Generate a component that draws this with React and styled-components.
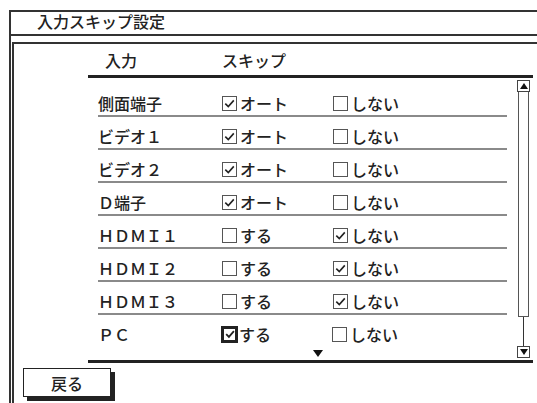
import React from 'react';
import styled, { createGlobalStyle } from 'styled-components';

const Global = createGlobalStyle`
    html, body {
        margin: 0;
        background: #fff;
    }
    body {
        font-family: "Noto Sans CJK JP", "Noto Sans", sans-serif;
        color: #222;
        overflow: hidden;
    }
    svg {
        display: block;
    }
`;

const Frame = styled.div`
    margin: 10px 0 0 9px;
    height: 393px;
    box-sizing: border-box;
    border-top: 2px solid #333;
    border-left: 2px solid #333;
    display: flex;
    flex-direction: column;
`;

const TitleBar = styled.div`
    height: 22px;
    border-bottom: 2px solid #333;
    padding-left: 26px;
    font-size: 16px;
    font-weight: 500;
    line-height: 19px;
`;

const Inner = styled.div`
    flex: 1;
    margin: 6px 0 0 1px;
    border-top: 2px solid #333;
    border-left: 2px solid #333;
    padding-top: 6px;
    display: flex;
    flex-direction: column;
`;

const HeadRow = styled.div`
    display: flex;
    margin: 0 4px 0 74px;
    padding: 0 0 5px 17px;
    border-bottom: 3px solid #222;
    font-size: 16px;
    font-weight: 500;
    line-height: 20px;
`;

const HeadCell = styled.div`
    width: ${p => p.w ? p.w + 'px' : 'auto'};
`;

const ListBody = styled.div`
    display: flex;
    margin: 0 4px 0 74px;
    padding: 0 3px 0 10px;
    border-bottom: 3px solid #222;
`;

const Rows = styled.div`
    width: 409px;
    padding-top: 6px;
`;

const Row = styled.div`
    display: flex;
    align-items: flex-end;
    height: 33px;
    box-sizing: border-box;
    padding-bottom: 3px;
    border-bottom: 2px solid ${p => p.last ? 'transparent' : '#8a8a8a'};
    font-size: 16px;
    font-weight: 500;
    line-height: 18px;
`;

const Label = styled.div`
    width: 124px;
    flex-shrink: 0;
`;

const Option = styled.div`
    display: flex;
    align-items: center;
    gap: ${p => p.bold ? '1px' : '3px'};
    width: ${p => p.w ? p.w + 'px' : 'auto'};
    margin-left: ${p => p.bold ? '-1px' : '0'};
    flex-shrink: 0;
`;

const Box = styled.span`
    flex-shrink: 0;
    width: ${p => p.bold ? '17px' : '15px'};
    height: ${p => p.bold ? '17px' : '15px'};
    box-sizing: border-box;
    border: ${p => p.bold ? '3px solid #222' : '1px solid #555'};
    display: flex;
    align-items: center;
    justify-content: center;
    background: #fff;
`;

const Footer = styled.div`
    height: 12px;
    padding-left: 215px;
    padding-top: 2px;
    box-sizing: border-box;
`;

const Scroll = styled.div`
    width: 13px;
    margin: 2px 0 2px 10px;
    display: flex;
    flex-direction: column;
`;

const ArrowBtn = styled.div`
    height: 12px;
    box-sizing: border-box;
    border: 1.5px solid #444;
    display: flex;
    align-items: center;
    justify-content: center;
`;

const Thumb = styled.div`
    height: 225px;
    margin: 0 1px;
    box-sizing: border-box;
    border: 1.5px solid #555;
    border-top: none;
`;

const Track = styled.div`
    flex: 1;
    display: flex;
    justify-content: center;
    &::before {
        content: "";
        width: 1.5px;
        background: #333;
    }
`;

const BackButton = styled.div`
    margin: 5px 0 0 9px;
    width: 88px;
    height: 29px;
    box-sizing: border-box;
    border: 1.5px solid #222;
    box-shadow: 4px 4px 0 #222;
    display: flex;
    align-items: center;
    justify-content: center;
    font-size: 16px;
    font-weight: 500;
`;

const Check = ({ on, bold }) => (
    <Box bold={bold}>
        {on && (
            <svg width={bold ? 10 : 11} height={bold ? 10 : 11} viewBox="0 0 11 11">
                <path d="M1.3 5.6 L4.3 8.6 L9.8 2.4" fill="none" stroke="#222" strokeWidth={bold ? 2 : 1.6} />
            </svg>
        )}
    </Box>
);

const Tri = ({ up }) => (
    <svg width="8" height="6" viewBox="0 0 8 6">
        <path d={up ? 'M0 6 L4 0 L8 6 Z' : 'M0 0 L8 0 L4 6 Z'} fill="#111" />
    </svg>
);

const rows = [
    { name: '側面端子', a: 'オート', aOn: true, bOn: false },
    { name: 'ビデオ１', a: 'オート', aOn: true, bOn: false },
    { name: 'ビデオ２', a: 'オート', aOn: true, bOn: false },
    { name: 'Ｄ端子', a: 'オート', aOn: true, bOn: false },
    { name: 'ＨＤＭＩ１', a: 'する', aOn: false, bOn: true },
    { name: 'ＨＤＭＩ２', a: 'する', aOn: false, bOn: true },
    { name: 'ＨＤＭＩ３', a: 'する', aOn: false, bOn: true },
    { name: 'ＰＣ', a: 'する', aOn: true, bOn: false, focus: true },
];

export default function App() {
    return (
        <>
            <Global />
            <Frame>
                <TitleBar>入力スキップ設定</TitleBar>
                <Inner>
                    <HeadRow>
                        <HeadCell w={117}>入力</HeadCell>
                        <HeadCell>スキップ</HeadCell>
                    </HeadRow>
                    <ListBody>
                        <Rows>
                            {rows.map((r, i) => (
                                <Row key={r.name} last={i === rows.length - 1}>
                                    <Label>{r.name}</Label>
                                    <Option w={111} bold={r.focus}>
                                        <Check on={r.aOn} bold={r.focus} />
                                        {r.a}
                                    </Option>
                                    <Option>
                                        <Check on={r.bOn} />
                                        しない
                                    </Option>
                                </Row>
                            ))}
                            <Footer>
                                <svg width="10" height="7" viewBox="0 0 10 7">
                                    <path d="M0 0 L10 0 L5 7 Z" fill="#111" />
                                </svg>
                            </Footer>
                        </Rows>
                        <Scroll>
                            <ArrowBtn><Tri up /></ArrowBtn>
                            <Thumb />
                            <Track />
                            <ArrowBtn><Tri /></ArrowBtn>
                        </Scroll>
                    </ListBody>
                    <BackButton>戻る</BackButton>
                </Inner>
            </Frame>
        </>
    );
}
